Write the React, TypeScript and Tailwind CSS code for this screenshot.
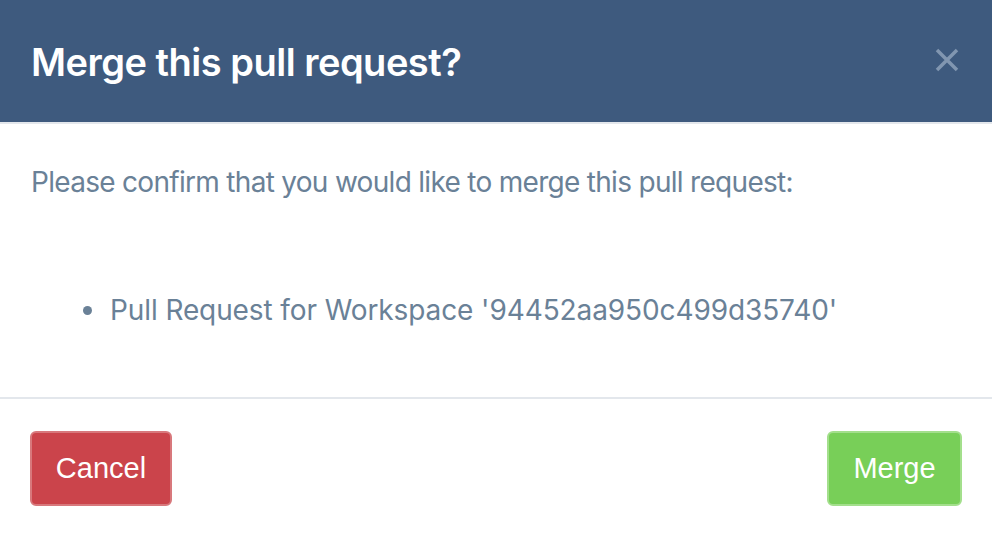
export default function App() {
  return (
    <div className="w-[992px] h-[534px] bg-white flex flex-col" style={{ fontFamily: 'Inter, "Noto Sans", sans-serif' }}>
      <div className="h-[122px] bg-[#3e5a7e] flex items-center justify-between pl-[31px] pr-[32px] border-b-2 border-[#e3e7ec] box-content">
        <h1 className="text-white text-[38px] font-semibold tracking-[-0.5px] leading-none pt-[2px]">Merge this pull request?</h1>
        <svg width="26" height="26" viewBox="0 0 26 26" className="mb-[2px]">
          <path d="M3 3 L23 23 M23 3 L3 23" stroke="#8196b0" strokeWidth="3.5" />
        </svg>
      </div>
      <div className="flex-1 flex flex-col text-[#6a8197] text-[28px] tracking-[-0.7px] pl-[31px]">
        <p className="mt-[44px] leading-none">Please confirm that you would like to merge this pull request:</p>
        <ul className="mt-[100px] ml-[77px] list-disc leading-none">
          <li className="pl-[2px] tracking-[-0.1px]">Pull Request for Workspace '94452aa950c499d35740'</li>
        </ul>
      </div>
      <div className="h-[137px] border-t-2 border-[#e3e7ec] flex items-start justify-between px-[30px] pt-[32px]" style={{ fontFamily: '"Liberation Sans", Arial, sans-serif' }}>
        <button className="w-[142px] h-[75px] rounded-[6px] bg-[#cb444b] border-2 border-[#d8787c] text-white text-[29px]">Cancel</button>
        <button className="w-[135px] h-[75px] rounded-[6px] bg-[#78cf58] border-2 border-[#a3df8c] text-white text-[29px]">Merge</button>
      </div>
    </div>
  );
}
